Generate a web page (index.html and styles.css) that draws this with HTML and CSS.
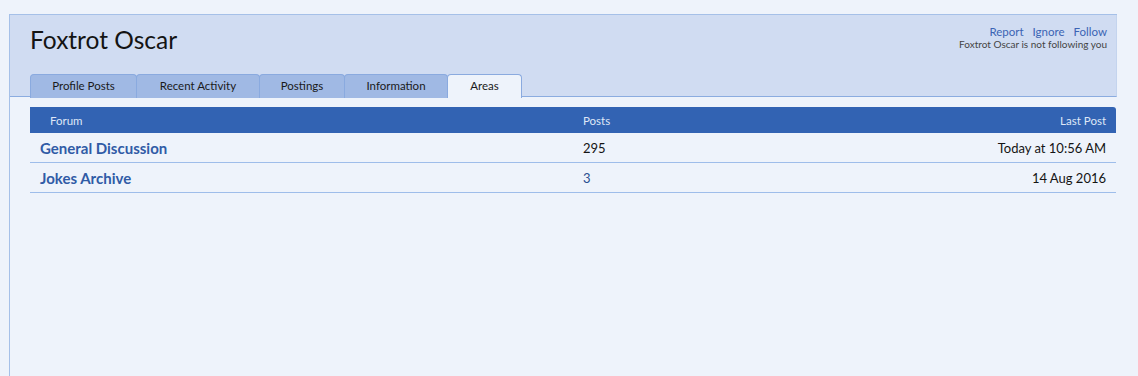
FILE: index.html
```html
<!DOCTYPE html>
<html>
<head>
<meta charset="utf-8">
<link rel="stylesheet" href="styles.css">
</head>
<body>
<div class="page">
  <div class="header">
    <div class="head-row">
      <h1 class="title">Foxtrot Oscar</h1>
      <div class="actions">
        <div class="links"><a>Report</a><a>Ignore</a><a>Follow</a></div>
        <div class="note">Foxtrot Oscar is not following you</div>
      </div>
    </div>
    <ul class="tabs">
      <li class="tab t1">Profile Posts</li>
      <li class="tab t2">Recent Activity</li>
      <li class="tab t3">Postings</li>
      <li class="tab t4">Information</li>
      <li class="tab t5 active">Areas</li>
    </ul>
  </div>
  <div class="content">
    <div class="table">
      <div class="thead">
        <div class="c-forum">Forum</div>
        <div class="c-posts">Posts</div>
        <div class="c-last">Last Post</div>
      </div>
      <div class="row">
        <div class="c-forum name">General Discussion</div>
        <div class="c-posts">295</div>
        <div class="c-last">Today at 10:56 AM</div>
      </div>
      <div class="row">
        <div class="c-forum name">Jokes Archive</div>
        <div class="c-posts link">3</div>
        <div class="c-last">14 Aug 2016</div>
      </div>
    </div>
  </div>
</div>
</body>
</html>
```
FILE: styles.css
```css
html, body {
  margin: 0;
  padding: 0;
  background: #eef3fb;
  height: 100%;
}
body {
  font-family: Lato, "DejaVu Sans", sans-serif;
  color: #141414;
}
.page {
  margin: 14px 0 0 9px;
  border-left: 1px solid #a5c0e8;
  border-top: 1px solid #a5c0e8;
  min-height: 362px;
  width: 1107px;
}
.header {
  background: #d0dcf2;
  border-bottom: 1px solid #8bace0;
  border-right: 1px solid #c4d4ee;
}
.head-row {
  display: flex;
  justify-content: space-between;
  align-items: flex-start;
  padding: 0 9px 0 20px;
}
.title {
  margin: 10px 0 0;
  font-size: 24.5px;
  font-weight: normal;
  color: #141414;
  line-height: 30px;
}
.actions {
  margin-top: 10px;
  text-align: right;
}
.links {
  font-size: 11.5px;
  line-height: 14px;
}
.links a {
  color: #3b64b4;
  margin-left: 9px;
}
.note {
  font-size: 10px;
  line-height: 11px;
  color: #444;
}
.tabs {
  list-style: none;
  margin: 19px 0 -1px 20px;
  padding: 0;
  display: flex;
  height: 23px;
}
.tab {
  box-sizing: border-box;
  height: 24px;
  background: #a0b9e4;
  border: 1px solid #8aaadf;
  border-bottom: none;
  border-radius: 4px 4px 0 0;
  font-size: 11.5px;
  line-height: 22px;
  text-align: center;
  color: #1a1a1a;
  margin-right: -1px;
}
.t1 { width: 107px; }
.t2 { width: 124px; }
.t3 { width: 86px; }
.t4 { width: 104px; }
.t5 { width: 75px; }
.tab.active {
  background: #eef3fb;
  position: relative;
  z-index: 1;
}
.content {
  padding: 10px 0 0 20px;
}
.table {
  width: 1086px;
}
.thead {
  display: flex;
  background: #3263b3;
  color: #dfe7f7;
  font-size: 11.5px;
  height: 26px;
  align-items: center;
  border-radius: 0 3px 0 0;
}
.row {
  display: flex;
  align-items: center;
  height: 29px;
  border-bottom: 1px solid #9ebdea;
  font-size: 13px;
}
.c-forum { width: 553px; padding-left: 20px; box-sizing: border-box; }
.row .c-forum { padding-left: 10px; }
.c-posts { width: 300px; }
.c-last { flex: 1; text-align: right; padding-right: 10px; }
.name {
  font-size: 15px;
  font-weight: bold;
  color: #305ba6;
}
.link { color: #2a4f90; }
```
